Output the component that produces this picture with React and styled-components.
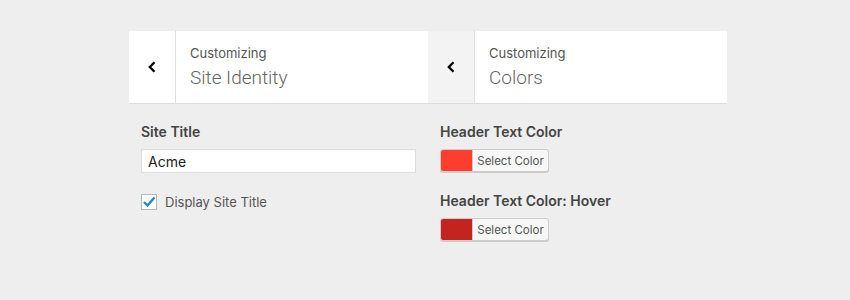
import React from 'react'
import styled, { createGlobalStyle } from 'styled-components';

const GlobalStyle = createGlobalStyle`
  body {
    margin: 0;
    background: #eeeeee;
    font-family: Inter, "Liberation Sans", Arial, sans-serif;
    color: #444;
  }
`;

const Page = styled.div`
  width: 850px;
  height: 300px;
  box-sizing: border-box;
  padding: 31px 0 0 129px;
  display: flex;
`;

const Panel = styled.div`
  width: 299px;
  display: flex;
  flex-direction: column;
`;

const Header = styled.div`
  display: flex;
  height: 72px;
  background: #fff;
  border-bottom: 1px solid #dcdcdc;
`;

const BackButton = styled.div`
  width: 46px;
  display: flex;
  align-items: center;
  justify-content: center;
  background: ${props => props.active ? '#f3f3f3' : '#fff'};
  border-right: 1px solid #dedede;
  color: #000;
`;

const Titles = styled.div`
  display: flex;
  flex-direction: column;
  justify-content: center;
  padding-left: 14px;
  padding-top: 1px;
`;

const Kicker = styled.div`
  font-size: 13px;
  color: #555;
  line-height: 18px;
`;

const Title = styled.div`
  font-family: Roboto, "Liberation Sans", Arial, sans-serif;
  font-size: 19px;
  font-weight: 300;
  color: #666;
  line-height: 28px;
  margin-top: 2px;
`;

const Body = styled.div`
  padding: 19px 12px 0 12px;
  display: flex;
  flex-direction: column;
`;

const Label = styled.div`
  font-size: 14px;
  font-weight: 600;
  color: #444;
  line-height: 18px;
  margin-bottom: 8px;
`;

const TextInput = styled.input`
  width: 275px;
  height: 24px;
  box-sizing: border-box;
  border: 1px solid #dddddd;
  background: #fff;
  box-shadow: inset 0 1px 2px rgba(0,0,0,0.04);
  font-family: inherit;
  font-size: 14px;
  color: #222;
  padding: 0 6px;
  outline: none;
`;

const CheckRow = styled.label`
  display: flex;
  align-items: center;
  gap: 8px;
  margin-top: 21px;
  font-size: 13px;
  color: #555;
`;

const Box = styled.span`
  width: 16px;
  height: 16px;
  box-sizing: border-box;
  border: 1px solid #b4b9be;
  background: #fff;
  display: flex;
  align-items: center;
  justify-content: center;
`;

const Field = styled.div`
  display: flex;
  flex-direction: column;
  margin-bottom: 20px;
`;

const ColorButton = styled.div`
  display: flex;
  width: 109px;
  height: 23px;
  box-sizing: border-box;
  border: 1px solid #cccccc;
  border-radius: 3px;
  box-shadow: 0 1px 0 #cccccc;
  background: #f7f7f7;
  overflow: hidden;
`;

const Swatch = styled.span`
  width: 31px;
  background: ${props => props.color};
  border-right: 1px solid #cccccc;
`;

const ButtonText = styled.span`
  flex: 1;
  display: flex;
  align-items: center;
  justify-content: center;
  font-size: 11.5px;
  color: #555;
`;

const Chevron = () => (
  <svg width="12" height="14" viewBox="0 0 12 14">
    <path d="M8.5 2.2 L3.8 7 L8.5 11.8" fill="none" stroke="#000" strokeWidth="2.3" />
  </svg>
);

const Check = () => (
  <svg width="14" height="12" viewBox="0 0 14 12">
    <path d="M2 6 L5.5 9.5 L12.5 1.5" fill="none" stroke="#1e8cbe" strokeWidth="2.4" />
  </svg>
);

const App = () => {
  return (
    <Page>
      <GlobalStyle />
      <Panel>
        <Header>
          <BackButton><Chevron /></BackButton>
          <Titles>
            <Kicker>Customizing</Kicker>
            <Title>Site Identity</Title>
          </Titles>
        </Header>
        <Body>
          <Label>Site Title</Label>
          <TextInput defaultValue="Acme" />
          <CheckRow>
            <Box><Check /></Box>
            Display Site Title
          </CheckRow>
        </Body>
      </Panel>
      <Panel>
        <Header>
          <BackButton active><Chevron /></BackButton>
          <Titles>
            <Kicker>Customizing</Kicker>
            <Title>Colors</Title>
          </Titles>
        </Header>
        <Body>
          <Field>
            <Label>Header Text Color</Label>
            <ColorButton>
              <Swatch color="#fd3e2e" />
              <ButtonText>Select Color</ButtonText>
            </ColorButton>
          </Field>
          <Field>
            <Label>Header Text Color: Hover</Label>
            <ColorButton>
              <Swatch color="#c42420" />
              <ButtonText>Select Color</ButtonText>
            </ColorButton>
          </Field>
        </Body>
      </Panel>
    </Page>
  )
}

export default App;
